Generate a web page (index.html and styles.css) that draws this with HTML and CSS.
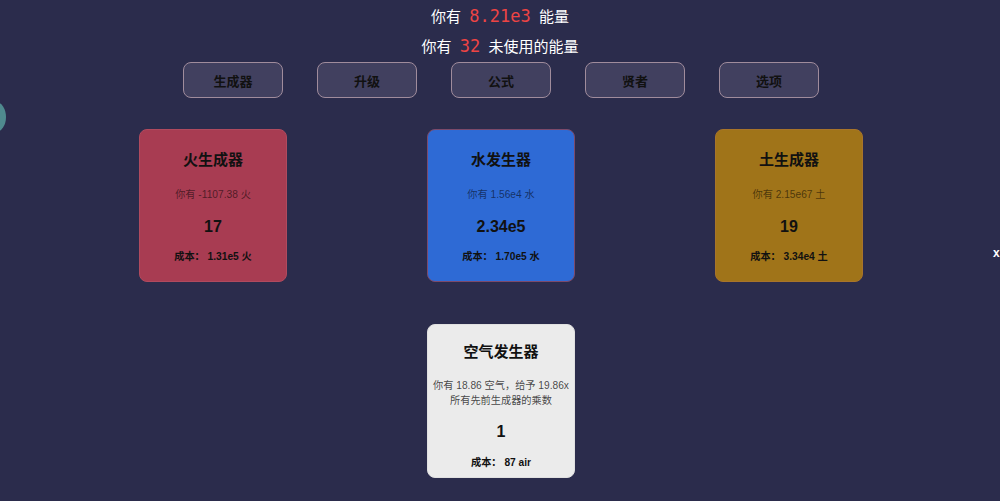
FILE: index.html
```
<!DOCTYPE html>
<html>
<head>
<meta charset="utf-8">
<link rel="stylesheet" href="styles.css">
</head>
<body>
<div class="orb"></div>
<div class="close">x</div>
<header class="stats">
  <p class="stat">你有 <span class="num">8.21e3</span> 能量</p>
  <p class="stat">你有 <span class="num">32</span> 未使用的能量</p>
</header>
<nav class="tabs">
  <button class="tab">生成器</button>
  <button class="tab">升级</button>
  <button class="tab">公式</button>
  <button class="tab">贤者</button>
  <button class="tab">选项</button>
</nav>
<main class="gens">
  <section class="card fire">
    <h2 class="title">火生成器</h2>
    <p class="have">你有 -1107.38 火</p>
    <p class="count">17</p>
    <p class="cost">成本： 1.31e5 火</p>
  </section>
  <section class="card water">
    <h2 class="title">水发生器</h2>
    <p class="have">你有 1.56e4 水</p>
    <p class="count">2.34e5</p>
    <p class="cost">成本： 1.70e5 水</p>
  </section>
  <section class="card earth">
    <h2 class="title">土生成器</h2>
    <p class="have">你有 2.15e67 土</p>
    <p class="count">19</p>
    <p class="cost">成本： 3.34e4 土</p>
  </section>
  <section class="card air">
    <h2 class="title">空气发生器</h2>
    <p class="have"><span class="line">你有 18.86 空气，给予 19.86x</span><br>所有先前生成器的乘数</p>
    <p class="count">1</p>
    <p class="cost">成本： 87 air</p>
  </section>
</main>
</body>
</html>
```
FILE: styles.css
```
html, body {
  margin: 0;
  padding: 0;
}
body {
  background: #2b2c4c;
  font-family: "Liberation Sans", "Noto Sans CJK SC", sans-serif;
  color: #fff;
  width: 1000px;
  height: 501px;
  overflow: hidden;
  position: relative;
}
.orb {
  position: absolute;
  left: -14px;
  top: 102px;
  width: 20px;
  height: 30px;
  border-radius: 50%;
  background: #4f8a8e;
}
.close {
  position: absolute;
  left: 993px;
  top: 246px;
  font-size: 12px;
  font-weight: bold;
  color: #fff;
}
.stats {
  padding-top: 5px;
  text-align: center;
}
.stat {
  margin: 0;
  height: 30px;
  line-height: 22px;
  font-size: 15px;
  font-family: "Noto Sans CJK SC", sans-serif;
}
.num {
  font-family: "DejaVu Sans Mono", monospace;
  color: #ee4444;
  font-size: 17px;
  margin: 0 5px;
}
.tabs {
  display: flex;
  justify-content: center;
  gap: 34px;
  margin-top: -3px;
  padding-left: 2px;
}
.tab {
  width: 100px;
  height: 36px;
  background: #41405f;
  border: 1px solid #a08c9c;
  border-radius: 8px;
  font-family: "Noto Sans CJK SC", sans-serif;
  font-weight: bold;
  font-size: 13px;
  color: #111;
  padding: 0;
}
.gens {
  display: grid;
  grid-template-columns: repeat(3, 148px);
  column-gap: 140px;
  row-gap: 42px;
  justify-content: center;
  padding-left: 2px;
  margin-top: 31px;
}
.card {
  border-radius: 8px;
  border: 1px solid #7a3a52;
  text-align: center;
  color: #111;
  padding: 17px 0 0;
  box-sizing: border-box;
  height: 153px;
}
.title {
  margin: 0;
  font-size: 15px;
  font-weight: bold;
  line-height: 26px;
}
.have {
  margin: 14px 0 0;
  font-size: 10.2px;
  line-height: 15px;
  color: rgba(0,0,0,0.55);
}
.line {
  white-space: nowrap;
}
.count {
  margin: 14px 0 0;
  font-size: 16px;
  font-weight: bold;
  line-height: 22px;
}
.cost {
  margin: 11px 0 0;
  font-size: 10.2px;
  font-weight: bold;
  line-height: 15px;
}
.fire { background: #a83c52; border-color: #b04a5e; }
.water { background: #2e6ad5; border-color: #7c4a6a; }
.earth { background: #a07419; border-color: #a8742a; }
.air {
  background: #ebebeb;
  border-color: #e0e0e0;
  grid-column: 2;
  height: 154px;
  padding-top: 14px;
}
.air .have { color: rgba(0,0,0,0.72); margin-top: 13px; }
.air .count { margin-top: 13px; }
.air .cost { margin-top: 12px; }
```
